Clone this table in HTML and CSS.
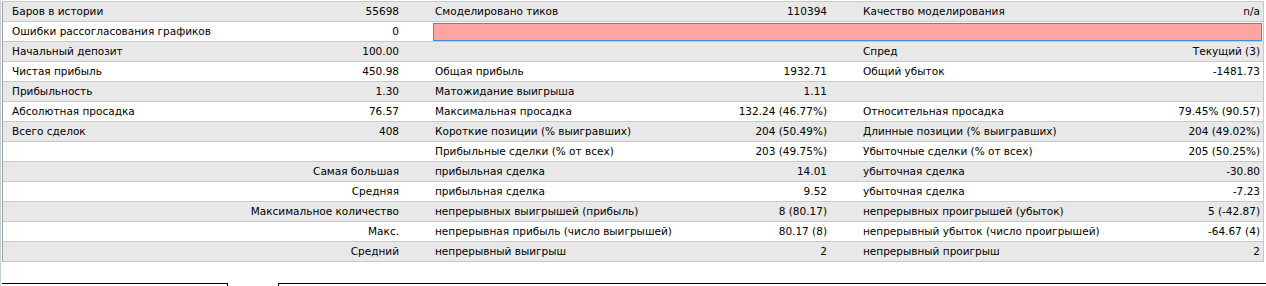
FILE: index.html
```html
<!DOCTYPE html>
<html lang="ru">
<head>
<meta charset="utf-8">
<link rel="stylesheet" href="styles.css">
</head>
<body>
<div class="frame">
  <div class="report">
    <div class="row odd">
      <div class="cell c1"><span>Баров в истории</span><span>55698</span></div>
      <div class="cell c2"><span>Смоделировано тиков</span><span>110394</span></div>
      <div class="cell c3"><span>Качество моделирования</span><span>n/a</span></div>
    </div>
    <div class="row">
      <div class="cell c1"><span>Ошибки рассогласования графиков</span><span>0</span></div>
      <div class="cell bar-cell"><div class="quality-bar"></div></div>
    </div>
    <div class="row odd">
      <div class="cell c1"><span>Начальный депозит</span><span>100.00</span></div>
      <div class="cell c2"></div>
      <div class="cell c3"><span>Спред</span><span>Текущий (3)</span></div>
    </div>
    <div class="row">
      <div class="cell c1"><span>Чистая прибыль</span><span>450.98</span></div>
      <div class="cell c2"><span>Общая прибыль</span><span>1932.71</span></div>
      <div class="cell c3"><span>Общий убыток</span><span>-1481.73</span></div>
    </div>
    <div class="row odd">
      <div class="cell c1"><span>Прибыльность</span><span>1.30</span></div>
      <div class="cell c2"><span>Матожидание выигрыша</span><span>1.11</span></div>
      <div class="cell c3"></div>
    </div>
    <div class="row">
      <div class="cell c1"><span>Абсолютная просадка</span><span>76.57</span></div>
      <div class="cell c2"><span>Максимальная просадка</span><span>132.24 (46.77%)</span></div>
      <div class="cell c3"><span>Относительная просадка</span><span>79.45% (90.57)</span></div>
    </div>
    <div class="row odd">
      <div class="cell c1"><span>Всего сделок</span><span>408</span></div>
      <div class="cell c2"><span>Короткие позиции (% выигравших)</span><span>204 (50.49%)</span></div>
      <div class="cell c3"><span>Длинные позиции (% выигравших)</span><span>204 (49.02%)</span></div>
    </div>
    <div class="row">
      <div class="cell c1"></div>
      <div class="cell c2"><span>Прибыльные сделки (% от всех)</span><span>203 (49.75%)</span></div>
      <div class="cell c3"><span>Убыточные сделки (% от всех)</span><span>205 (50.25%)</span></div>
    </div>
    <div class="row odd">
      <div class="cell c1 right"><span>Самая большая</span></div>
      <div class="cell c2"><span>прибыльная сделка</span><span>14.01</span></div>
      <div class="cell c3"><span>убыточная сделка</span><span>-30.80</span></div>
    </div>
    <div class="row">
      <div class="cell c1 right"><span>Средняя</span></div>
      <div class="cell c2"><span>прибыльная сделка</span><span>9.52</span></div>
      <div class="cell c3"><span>убыточная сделка</span><span>-7.23</span></div>
    </div>
    <div class="row odd">
      <div class="cell c1 right"><span>Максимальное количество</span></div>
      <div class="cell c2"><span>непрерывных выигрышей (прибыль)</span><span>8 (80.17)</span></div>
      <div class="cell c3"><span>непрерывных проигрышей (убыток)</span><span>5 (-42.87)</span></div>
    </div>
    <div class="row">
      <div class="cell c1 right"><span>Макс.</span></div>
      <div class="cell c2"><span>непрерывная прибыль (число выигрышей)</span><span>80.17 (8)</span></div>
      <div class="cell c3"><span>непрерывный убыток (число проигрышей)</span><span>-64.67 (4)</span></div>
    </div>
    <div class="row odd">
      <div class="cell c1 right"><span>Средний</span></div>
      <div class="cell c2"><span>непрерывный выигрыш</span><span>2</span></div>
      <div class="cell c3"><span>непрерывный проигрыш</span><span>2</span></div>
    </div>
  </div>
  <div class="footer">
    <div class="tabbox first"></div>
    <div class="tabbox second"></div>
  </div>
</div>
</body>
</html>
```
FILE: styles.css
```css
html, body {
  margin: 0;
  padding: 0;
  background: #ffffff;
}
body {
  font-family: "DejaVu Sans", "Liberation Sans", sans-serif;
  font-size: 10.5px;
  color: #000000;
}
.frame {
  width: 1266px;
  height: 286px;
  overflow: hidden;
  box-sizing: border-box;
  border-left: 1px solid #c4d0dc;
  padding-left: 1px;
  border-top: 1px solid #ffffff;
}
.report {
  width: 1260px;
  border-top: 1px solid #c8c8c8;
  border-left: 1px solid #a0a0a0;
  border-right: 1px solid #c8c8c8;
}
.row {
  display: grid;
  grid-template-columns: 428px 428px 1fr;
  height: 19px;
  border-bottom: 1px solid #c8c8c8;
  background: #ffffff;
}
.row.odd {
  background: #e8e8e8;
}
.cell {
  display: flex;
  justify-content: space-between;
  align-items: center;
  white-space: nowrap;
  line-height: 19px;
}
.c1 { padding: 0 32px 0 9px; }
.c2 { padding: 0 32px 0 4px; }
.c3 { padding: 0 3px 0 4px; }
.cell.right { justify-content: flex-end; }
.bar-cell {
  grid-column: 2 / 4;
  padding: 1px 1px 0 2px;
  align-items: stretch;
}
.quality-bar {
  flex: 1;
  height: 16px;
  background: #ffa3a3;
  border: 1px solid #3b8fe0;
}
.footer {
  display: flex;
  margin-top: 21px;
  height: 4px;
}
.tabbox {
  border-top: 1px solid #000000;
  height: 3px;
}
.tabbox.first {
  width: 225px;
  margin-left: 0;
  border-right: 1px solid #000000;
}
.tabbox.second {
  margin-left: 50px;
  flex: 1;
  border-left: 1px solid #000000;
}
```
